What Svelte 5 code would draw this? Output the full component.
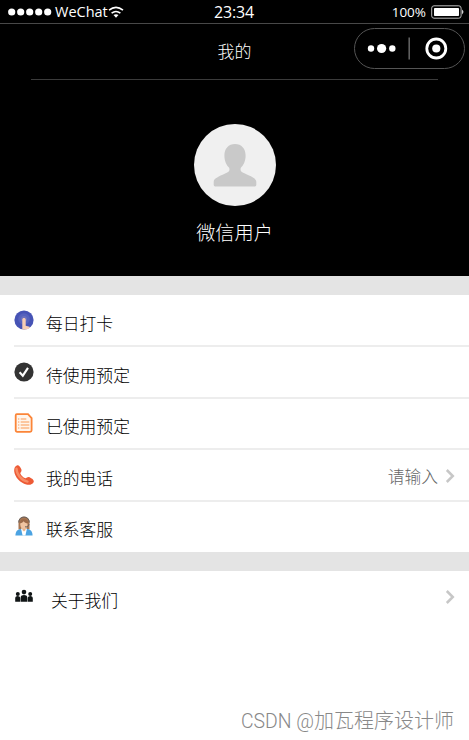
<script lang="ts">
	type Icon = 'touch' | 'check' | 'note' | 'phone' | 'service' | 'group';

	interface MenuItem {
		icon: Icon;
		label: string;
		value?: string;
		arrow?: boolean;
	}

	const items: MenuItem[] = [
		{ icon: 'touch', label: '每日打卡' },
		{ icon: 'check', label: '待使用预定' },
		{ icon: 'note', label: '已使用预定' },
		{ icon: 'phone', label: '我的电话', value: '请输入', arrow: true },
		{ icon: 'service', label: '联系客服' }
	];
	const about: MenuItem[] = [{ icon: 'group', label: '关于我们', arrow: true }];
</script>

{#snippet icon(name: Icon)}
	<svg class="icon" viewBox="0 0 20 20">
		{#if name === 'touch'}
			<circle cx="10" cy="10" r="9.6" fill="#4653b5" />
			<circle cx="10" cy="9" r="5.8" fill="#5662bd" />
			<circle cx="10" cy="9" r="3" fill="#6c71be" />
			<path d="M8.3 19.5V9.5c0-2 3.4-2 3.4 0v6.3l3.9.9v1.3c-2 1.3-4.2 1.9-7.3 1.5z" fill="#f8cdb4" />
		{:else if name === 'check'}
			<circle cx="10" cy="10" r="9.6" fill="#333" />
			<path d="M5.6 10.3l3.2 3.4 5.2-7.9" fill="none" stroke="#fff" stroke-width="2.1" />
		{:else if name === 'note'}
			<path d="M2.8 1.2h11.2l3.6 3.9v12.2q0 1.5-1.5 1.5H3.2q-1.5 0-1.5-1.5V2.6q0-1.4 1.1-1.4z" fill="#fff5ec" stroke="#fb8538" stroke-width="1.8" />
			<path d="M4.1 6h1.2M4.1 9h1.2M4.1 12h1.2M4.1 15h1.2" stroke="#fb924b" stroke-width="1.2" />
			<path d="M6.7 6h5.6M6.7 9h8.6M6.7 12h8.6M6.7 15h8.6" stroke="#fcc7a0" stroke-width="2" />
		{:else if name === 'phone'}
			<path d="M2.8.4C4.8-.2 6.3 1.7 7.3 4.2c.8 2-.7 2.9-1 4.2.9 2.1 2.7 3.9 5.1 4.9 1.3-.3 2.5-1.8 4.2-1 2.5 1.3 4.7 2.7 4.1 4.7-.9 2.5-4.3 3.4-7.4 2.5C6.3 17.9.8 12.3.2 6.3 0 3.3 1 1 2.8.4z" fill="#ed5a35" />
			<path d="M2.5 3.6C2.4 9.1 7.2 15.2 13.5 16.6" fill="none" stroke="#f78d66" stroke-width="2.4" stroke-linecap="round" />
		{:else if name === 'service'}
			<path d="M4.5 13.5V6c0-7 11-7 11 0v7.5z" fill="#a77550" />
			<path d="M1.4 19.4c.3-4.2 1.8-6 5.3-6.5h6.6c3.5.5 5 2.3 5.3 6.5z" fill="#4ba3e2" />
			<path d="M7 12.5h6l-1.6 6.9H8.6z" fill="#fff" />
			<path d="M8.4 10.5h3.2v3.4L10 15.4l-1.6-1.5z" fill="#e7b48f" />
			<ellipse cx="9.9" cy="8.3" rx="3.6" ry="4.5" fill="#f0c4a1" />
			<path d="M5.8 7.2C6.2 1.6 13.8 1.6 14.2 7.2c-2 .2-3.4-.5-4.5-2-1 1.2-2.1 1.9-3.9 2z" fill="#9b6a49" />
			<path d="M4.7 6.5c0-7.3 10.6-7.3 10.6 0M15 8.2c0 2-1.8 2.7-4 2.7" fill="none" stroke="#65615f" stroke-width="1" />
		{:else}
			<g fill="#111516">
				<circle cx="10" cy="6.1" r="2.3" />
				<circle cx="3.8" cy="7.9" r="2" />
				<circle cx="16.2" cy="7.9" r="2" />
				<path d="M6.7 15.8v-4.6c0-3 6.6-3 6.6 0v4.6zM1.2 15.8v-3.6c0-3 5-3 5 0v3.6zM13.8 15.8v-3.6c0-3 5-3 5 0v3.6z" />
			</g>
		{/if}
	</svg>
{/snippet}

{#snippet row(item: MenuItem)}
	<li class="row" class:about={item.icon === 'group'}>
		{@render icon(item.icon)}
		<span class="label">{item.label}</span>
		{#if item.value}
			<span class="value">{item.value}</span>
		{/if}
		{#if item.arrow}
			<svg class="arrow" viewBox="0 0 10 16">
				<path d="M1.8 2L7.8 8l-6 6" />
			</svg>
		{/if}
	</li>
{/snippet}

<div class="page">
	<header class="status">
		<div class="carrier">
			<svg class="signal" width="44" height="8" viewBox="0 0 44 8">
				{#each [0, 1, 2, 3, 4] as n}
					<circle cx={3.7 + n * 9} cy="4" r="3.6" />
				{/each}
			</svg>
			<span>WeChat</span>
			<svg class="wifi" width="16" height="12" viewBox="0 0 16 12">
				<path d="M1 4.2q7-5.8 14 0M3.6 7.2q4.4-3.5 8.8 0" />
				<path class="dot" d="M5.5 9.1q2.5-1.8 5 0L8 11.7z" />
			</svg>
		</div>
		<time>23:34</time>
		<div class="battery">
			<span>100%</span>
			<svg width="34" height="14" viewBox="0 0 34 14">
				<rect x=".7" y=".8" width="29.4" height="12.4" rx="2.3" fill="none" stroke="#bbb" />
				<rect x="3" y="3" width="25" height="8" rx=".8" fill="#fff" />
				<path d="M31.2 4.6q2.4 2.4 0 4.8z" fill="#fff" />
			</svg>
		</div>
	</header>

	<nav>
		<h1>我的</h1>
		<div class="capsule">
			<svg width="109" height="39" viewBox="0 0 109 39">
				<g fill="#fff">
					<circle cx="16" cy="19.5" r="3.2" />
					<circle cx="26.6" cy="19.5" r="4.6" />
					<circle cx="37.3" cy="19.5" r="3.2" />
					<circle cx="81.3" cy="19.5" r="4.1" />
				</g>
				<path d="M54.2 8.5v22" stroke="#666" stroke-width="1.5" />
				<circle cx="81.3" cy="19.5" r="9.5" fill="none" stroke="#fff" stroke-width="2.8" />
			</svg>
		</div>
	</nav>

	<section class="profile">
		<svg class="avatar" viewBox="0 0 82 82">
			<circle cx="41" cy="41" r="41" fill="#f0f0f0" />
			<path d="M41 20c-6.5 0-10.6 4.6-10.6 11.4 0 6 2.2 9.7 4.8 12.3.9 3.2-.5 4.2-3.6 5.6-8.7 4-11.9 5.4-11.9 8.8v3q0 1.4 1.5 1.4h39.6q1.5 0 1.5-1.4v-3c0-3.4-3.2-4.8-11.9-8.8-3.1-1.4-4.5-2.4-3.6-5.6 2.6-2.6 4.8-6.3 4.8-12.3C51.6 24.6 47.5 20 41 20z" fill="#c9c9c9" />
		</svg>
		<p>微信用户</p>
	</section>

	<ul class="menu">
		{#each items as item}
			{@render row(item)}
		{/each}
	</ul>
	<ul class="menu">
		{#each about as item}
			{@render row(item)}
		{/each}
	</ul>

	<footer><span>CSDN @</span>加瓦程序设计师</footer>
</div>

<style>
	:global(body) {
		margin: 0;
		background: #fff;
	}

	.page {
		display: flex;
		flex-direction: column;
		width: 469px;
		height: 740px;
		overflow: hidden;
		color: #000;
		font-family: 'Open Sans', 'Noto Sans CJK SC', sans-serif;
		font-weight: 300;
	}

	svg {
		display: block;
		flex: none;
	}

	.status {
		box-sizing: border-box;
		display: grid;
		grid-template-columns: 1fr auto 1fr;
		align-items: center;
		height: 24px;
		padding: 1px 4px 0 8px;
		border-bottom: 1px solid #484848;
		background: #000;
		color: #fff;
		font-family: 'Open Sans', sans-serif;
		font-size: 14.5px;
		font-weight: 400;
		line-height: 22px;
	}

	.status time {
		margin-right: 5px;
		font-size: 16px;
		letter-spacing: -0.2px;
	}

	.carrier,
	.battery {
		display: flex;
		align-items: center;
	}

	.signal {
		margin-right: 3px;
		fill: #fff;
	}

	.wifi {
		fill: none;
		stroke: #fff;
		stroke-width: 1.6;
	}

	.wifi .dot {
		fill: #fff;
		stroke: none;
	}

	.battery {
		justify-content: flex-end;
		gap: 5px;
		font-size: 13.5px;
	}

	nav {
		display: grid;
		grid-template-columns: 1fr auto 1fr;
		align-items: center;
		height: 55px;
		padding: 0 4px;
		background: #000;
		color: #fff;
	}

	h1 {
		grid-column: 2;
		margin: 0;
		font-size: 17px;
		font-weight: 300;
		line-height: 24px;
	}

	.capsule {
		justify-self: end;
		margin-bottom: 6px;
		width: 109px;
		height: 39px;
		border: 1px solid #555;
		border-radius: 21px;
	}

	.profile {
		display: flex;
		flex-direction: column;
		align-items: center;
		height: 197px;
		background: #000;
		color: #fff;
	}

	.profile::before {
		content: '';
		width: 407px;
		height: 1px;
		margin-bottom: 44.4px;
		background: #3b3b3b;
	}

	.avatar {
		width: 82px;
		height: 82px;
	}

	.profile p {
		margin: 12.5px 0 0;
		font-size: 19.2px;
		font-weight: 300;
		line-height: 28px;
	}

	.menu {
		margin: 0;
		padding: 0;
		list-style: none;
	}

	.menu::before {
		content: '';
		display: block;
		height: 18.5px;
		background: #e4e4e4;
	}

	.row {
		position: relative;
		box-sizing: border-box;
		display: flex;
		align-items: center;
		height: 51.5px;
		padding: 0 14px;
		font-size: 16.8px;
		line-height: 24px;
	}

	.row:not(:last-child)::after {
		content: '';
		position: absolute;
		right: 0;
		bottom: -1px;
		left: 14px;
		height: 2px;
		background: #ededed;
	}

	.icon {
		width: 20px;
		height: 20px;
	}

	.label {
		flex: 1;
		margin: 8px 0 0 12px;
	}

	.about .label {
		margin: 9px 0 0 17px;
	}

	.value {
		margin-top: 4px;
		color: #666;
	}

	.arrow {
		width: 10px;
		height: 16px;
		margin: 2px 0 0 7px;
		fill: none;
		stroke: #c7c7c7;
		stroke-width: 2.5;
	}

	footer {
		margin-top: auto;
		padding: 0 15px 3px 0;
		color: #888;
		font-family: 'Noto Sans CJK SC', sans-serif;
		font-size: 20px;
		line-height: 30px;
		text-align: right;
	}

	footer span {
		font-family: Roboto, sans-serif;
		font-size: 19.4px;
	}
</style>
